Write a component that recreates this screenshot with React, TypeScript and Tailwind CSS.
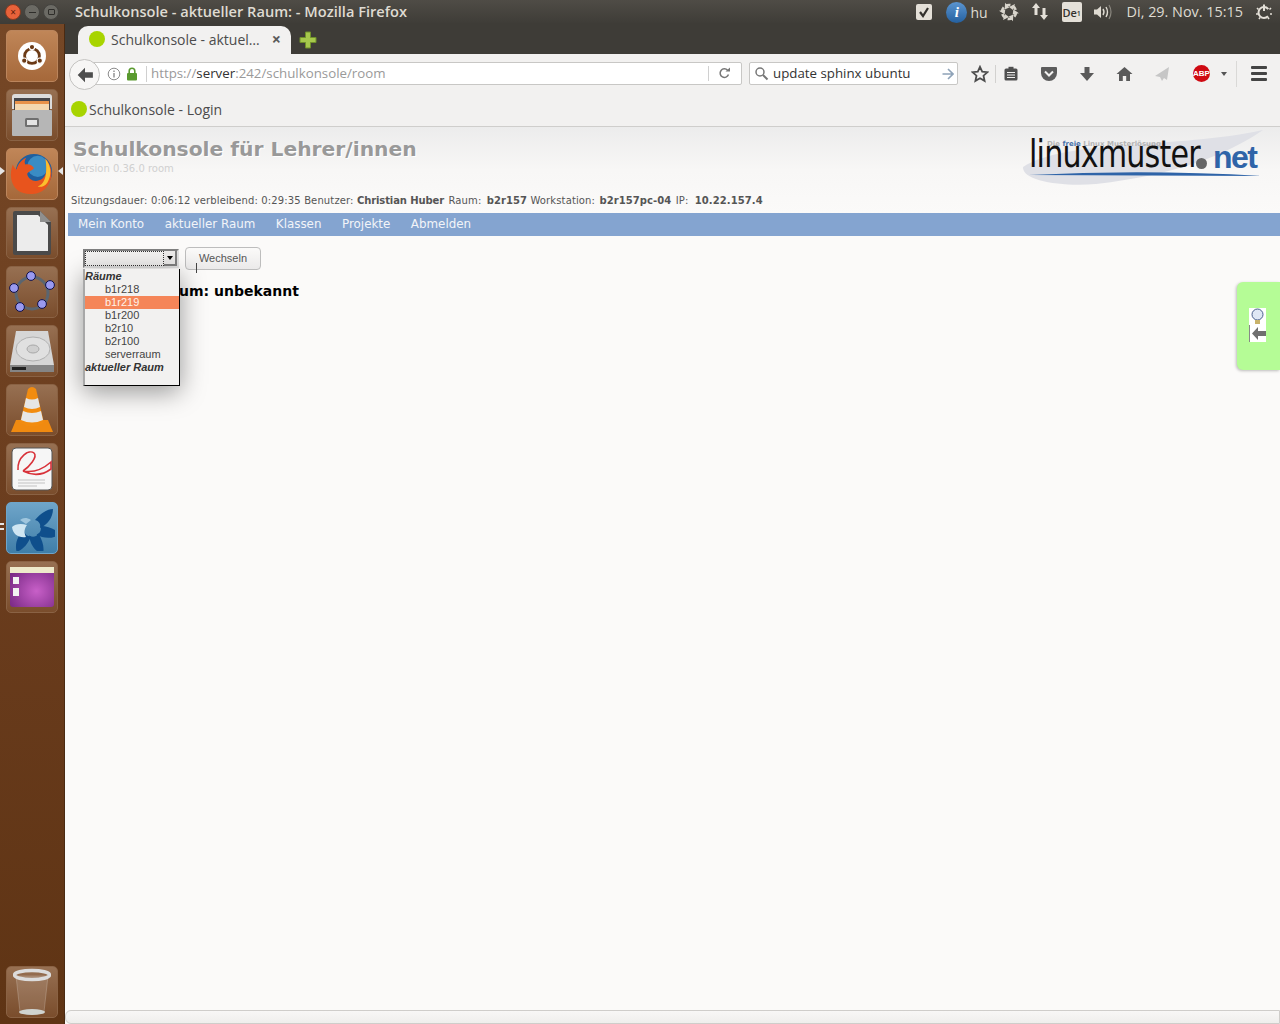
import type { ReactNode } from "react";

const ui = { fontFamily: '"Open Sans", "Noto Sans", sans-serif' };
const page = { fontFamily: '"DejaVu Sans", Verdana, sans-serif' };
const form = { fontFamily: '"Liberation Sans", Arial, sans-serif' };

function Tile({ children, active = false, blue = false }: { children: ReactNode; active?: boolean; blue?: boolean }) {
  const tone = blue
    ? "bg-gradient-to-b from-[#6fa5c9] to-[#3f7ea8] border-[#6fa5c9]"
    : active
      ? "bg-gradient-to-b from-[#c08658] to-[#a5683a] border-[#bb855c]"
      : "bg-gradient-to-b from-[#977052] to-[#7a4d2c] border-[#8a6244]";
  return <div className={`w-[52px] h-[52px] rounded-[5px] border flex items-center justify-center shrink-0 ${tone}`}>{children}</div>;
}

function Launcher() {
  return (
    <aside className="w-[65px] shrink-0 relative flex flex-col items-center pt-[6px] pb-[6px] pr-[1px] bg-gradient-to-b from-[#754726] via-[#6b3d1e] to-[#5f3414] border-r border-[#4a2a12]">
      <div className="flex flex-col gap-[7px]">
        <Tile active>
          <svg width="28" height="28" viewBox="0 0 36 36">
            <circle cx="18" cy="18" r="18" fill="#fff" />
            <circle cx="18" cy="18" r="9.5" fill="none" stroke="#6b3a16" strokeWidth="3.6" />
            <circle cx="18" cy="6.5" r="3.4" fill="#6b3a16" stroke="#fff" strokeWidth="1.4" />
            <circle cx="8" cy="24" r="3.4" fill="#6b3a16" stroke="#fff" strokeWidth="1.4" />
            <circle cx="28" cy="24" r="3.4" fill="#6b3a16" stroke="#fff" strokeWidth="1.4" />
          </svg>
        </Tile>
        <Tile>
          <svg width="42" height="44" viewBox="0 0 42 44">
            <path d="M1 4 Q1 1 4 1 H38 Q41 1 41 4 V16 H1Z" fill="#dcdcdc" />
            <rect x="3" y="5" width="36" height="13" fill="#46464a" />
            <rect x="4" y="8" width="34" height="3" fill="#e8924a" />
            <rect x="4" y="11" width="34" height="6" fill="#f4d8b0" />
            <rect x="1" y="17" width="40" height="26" rx="1" fill="#b6b6b6" />
            <rect x="14" y="25" width="14" height="9" rx="1.5" fill="#6f6f6f" />
            <rect x="16" y="27" width="10" height="5" fill="#e4e4e4" />
          </svg>
        </Tile>
        <Tile active>
          <svg width="46" height="46" viewBox="0 0 48 48">
            <circle cx="26" cy="22" r="19" fill="#1f5f9e" />
            <circle cx="30" cy="16" r="11" fill="#3a8cc4" />
            <path d="M38 8 C46 16 47 30 38 39 C31 46 17 47 9 41 C2 35 0 24 4 14 C5 17 7 19 8 19 C9 14 13 9 18 7 C16 10 16 12 17 14 C21 13 25 15 26 18 C25 20 20 21 19 24 C20 30 27 33 33 30 C39 27 41 18 38 8Z" fill="#e8541d" />
            <path d="M38 8 C44 15 45 25 40 33 C37 37 33 38 30 37 C36 35 41 27 38 8Z" fill="#fbc02d" />
          </svg>
        </Tile>
        <Tile>
          <svg width="40" height="46" viewBox="0 0 40 46">
            <path d="M1 3 Q1 1 3 1 H28 L39 12 V43 Q39 45 37 45 H3 Q1 45 1 43Z" fill="#4a4a4a" />
            <path d="M5 5 H26 L36 15 V41 H5Z" fill="#ececec" />
            <path d="M28 1 L39 12 H28Z" fill="#8f8f8f" />
          </svg>
        </Tile>
        <Tile>
          <svg width="50" height="50" viewBox="0 0 50 50">
            <circle cx="25" cy="26" r="16" fill="none" stroke="#5a6570" strokeWidth="3" />
            {[[24, 9], [43, 18], [35, 37], [13, 40], [7, 21]].map(([x, y]) => (
              <circle key={x} cx={x} cy={y} r="4.4" fill="#9a9af0" stroke="#10104a" strokeWidth="1" />
            ))}
          </svg>
        </Tile>
        <Tile>
          <svg width="46" height="44" viewBox="0 0 46 44">
            <path d="M7 2 H39 L45 36 H1Z" fill="#d6d6d6" />
            <ellipse cx="24" cy="20" rx="17" ry="12" fill="#e0e0e0" stroke="#b0b0b0" />
            <ellipse cx="24" cy="20" rx="6" ry="4" fill="#cfcfcf" stroke="#a8a8a8" />
            <rect x="1" y="36" width="44" height="7" fill="#858585" />
            <rect x="3" y="38" width="14" height="3" fill="#222" />
          </svg>
        </Tile>
        <Tile>
          <svg width="42" height="48" viewBox="0 0 42 48">
            <path d="M5 34 L0 46 H42 L37 34Z" fill="#f08a10" />
            <path d="M17 3 Q21 -1 25 3 L33 37 Q21 44 9 37Z" fill="#f28c10" />
            <path d="M15 12 Q21 15 27 12 L29 21 Q21 25 13 21Z" fill="#e6e6e6" />
            <path d="M12 25 Q21 29 30 25 L32 34 Q21 39 10 34Z" fill="#e6e6e6" />
          </svg>
        </Tile>
        <Tile>
          <svg width="42" height="44" viewBox="0 0 42 44">
            <rect x="1" y="1" width="40" height="42" rx="4" fill="#f6f6f6" stroke="#555" />
            <path d="M7 23 C6 10 18 2 23 6 C27 10 18 20 12 24 M12 24 C22 26 32 22 40 15 V22 C32 28 22 29 12 24" fill="none" stroke="#d8323a" strokeWidth="1.6" />
            <path d="M7 33 H34 M7 36 H34 M7 39 H26" stroke="#c2c2c2" strokeWidth="1" />
          </svg>
        </Tile>
        <Tile blue>
          <svg width="46" height="46" viewBox="0 0 46 46">
            {[0, 55, 110, 165].map((a) => (
              <path key={a} transform={`rotate(${a} 23 23)`} d="M26 15 C32 8 38 4 44 4 C44 13 38 20 31 23 C32 19 30 16 26 15Z" fill="#0f4f8c" />
            ))}
            <path d="M18 20 C12 18 6 19 3 22 C4 30 10 33 17 32 C15 28 15 24 18 20Z" fill="#cfe6f2" />
            <path d="M22 15 C17 12 14 13 11 15 L17 19Z" fill="#9fc6de" />
          </svg>
        </Tile>
        <Tile>
          <svg width="46" height="42" viewBox="0 0 46 42">
            <defs>
              <radialGradient id="violet" cx="0.6" cy="0.6" r="0.7">
                <stop offset="0" stopColor="#c860c8" />
                <stop offset="1" stopColor="#7a2a86" />
              </radialGradient>
            </defs>
            <rect x="1" y="1" width="44" height="40" rx="3" fill="url(#violet)" />
            <rect x="1" y="1" width="44" height="6" fill="#eeeacb" />
            <rect x="4" y="11" width="6" height="7" fill="#f2f2f2" />
            <rect x="4" y="22" width="6" height="8" fill="#f2f2f2" />
          </svg>
        </Tile>
      </div>
      <div className="mt-auto">
        <Tile>
          <svg width="38" height="48" viewBox="0 0 38 48">
            <path d="M3 8 L7 44 Q19 48 31 44 L35 8Z" fill="#ffffff" fillOpacity="0.12" stroke="#ffffff" strokeOpacity="0.2" />
            <ellipse cx="19" cy="7" rx="17.5" ry="4.5" fill="none" stroke="#dcdcdc" strokeWidth="3.5" />
            <ellipse cx="19" cy="44" rx="13" ry="3" fill="#cfd3d0" />
          </svg>
        </Tile>
      </div>
      <span className="absolute left-0 top-[143px] w-0 h-0 border-y-[4px] border-y-transparent border-l-[5px] border-l-[#e6e6e6]" />
      <span className="absolute right-[1px] top-[143px] w-0 h-0 border-y-[4px] border-y-transparent border-r-[5px] border-r-[#e6e6e6]" />
      <span className="absolute left-0 top-[499px] w-[4px] h-[2px] bg-[#e6e6e6]" />
      <span className="absolute left-0 top-[504px] w-[4px] h-[2px] bg-[#e6e6e6]" />
    </aside>
  );
}

function TopBar() {
  return (
    <header className="h-[24px] shrink-0 flex items-center bg-gradient-to-b from-[#4f4c46] to-[#3e3c37] text-[#dfdbd2] text-[14px]" style={ui}>
      <div className="flex items-center gap-[3px] pl-[5px]">
        <span className="w-[16px] h-[16px] rounded-full bg-[#e8623a] border border-[#8a3a20] flex items-center justify-center text-[#5c1d0a] text-[10px] leading-none">×</span>
        <span className="w-[16px] h-[16px] rounded-full bg-[#6b6a64] border border-[#44433f] flex items-center justify-center">
          <span className="w-[7px] h-[1px] bg-[#2e2d2a]" />
        </span>
        <span className="w-[16px] h-[16px] rounded-full bg-[#6b6a64] border border-[#44433f] flex items-center justify-center">
          <span className="w-[7px] h-[6px] border border-[#2e2d2a] rounded-[1px]" />
        </span>
      </div>
      <span className="ml-[16px] font-semibold text-[14.6px] whitespace-nowrap">Schulkonsole - aktueller Raum: - Mozilla Firefox</span>
      <div className="ml-auto flex items-center h-full">
        <span className="w-[16px] h-[16px] rounded-[2px] bg-[#e4e0d8] flex items-center justify-center mr-[14px]">
          <svg width="12" height="12" viewBox="0 0 12 12"><path d="M2 6 L5 10 L10 2" fill="none" stroke="#33312d" strokeWidth="2.2" /></svg>
        </span>
        <span className="w-[21px] h-[21px] rounded-full bg-gradient-to-b from-[#5b95d0] to-[#24609f] flex items-center justify-center text-white italic font-bold text-[15px] leading-none" style={{ fontFamily: '"Liberation Serif", serif' }}>i</span>
        <span className="ml-[3px] mr-[11px]">hu</span>
        <svg width="20" height="20" viewBox="0 0 20 20" className="mr-[12px]">
          <circle cx="10" cy="10" r="7" fill="none" stroke="#d8d4cb" strokeWidth="2.6" strokeDasharray="5 2.3" />
          {[0, 60, 120, 180, 240, 300].map((a) => (
            <path key={a} transform={`rotate(${a} 10 10)`} d="M10 5 L16 2 L14 8Z" fill="#d8d4cb" />
          ))}
        </svg>
        <svg width="18" height="20" viewBox="0 0 18 20" className="mr-[13px]">
          <path d="M5 1 L9 6 H6.5 V13 H3.5 V6 H1Z M13 18 L17 13 H14.5 V6 H11.5 V13 H9Z" fill="#e4e0d8" />
        </svg>
        <span className="w-[20px] h-[20px] rounded-[2px] bg-[#e4e0d8] text-[#33312d] text-[11px] font-semibold flex items-center justify-center leading-none mr-[11px]">De<sub className="text-[7px]">1</sub></span>
        <svg width="20" height="16" viewBox="0 0 20 16" className="mr-[14px]">
          <path d="M1 5.5 H4 L8 2 V14 L4 10.5 H1Z" fill="#dfdbd2" />
          <path d="M10 5 Q12 8 10 11 M13 3 Q16 8 13 13" fill="none" stroke="#dfdbd2" strokeWidth="1.4" />
          <path d="M16 1 Q20 8 16 15" fill="none" stroke="#8a877f" strokeWidth="1.2" />
        </svg>
        <span className="text-[14.4px] text-[#dfdbd2] whitespace-nowrap mr-[12px]">Di, 29. Nov. 15:15</span>
        <svg width="18" height="18" viewBox="0 0 18 18" className="mr-[7px]">
          <circle cx="9" cy="9.5" r="5.5" fill="none" stroke="#e4e0d8" strokeWidth="2" strokeDasharray="26 9" strokeDashoffset="-4" />
          <path d="M9 1.5 V8" stroke="#e4e0d8" strokeWidth="2" />
          <path d="M2 5 L3.5 6.5 M16 5 L14.5 6.5 M1 11 H3 M15 11 H17 M4 16 L5 14.5 M14 16 L13 14.5" stroke="#e4e0d8" strokeWidth="1.6" />
        </svg>
      </div>
    </header>
  );
}

function TabStrip() {
  return (
    <div className="h-[30px] shrink-0 bg-[#3e3c37] flex items-end pl-[13px]" style={ui}>
      <div className="relative w-[213px] h-[28px] bg-[#f2f1f0] rounded-t-[10px] flex items-center pl-[11px] pb-[2px] text-[#4c4c4c] text-[14px]">
        <span className="w-[16px] h-[16px] rounded-full bg-[#a8d400] shrink-0" />
        <span className="ml-[6px] whitespace-nowrap">Schulkonsole - aktuel…</span>
        <span className="absolute right-[10px] top-[3px] text-[16px] font-bold text-[#5a5a5a] leading-[20px]">×</span>
      </div>
      <svg width="18" height="18" viewBox="0 0 18 18" className="ml-[8px] mb-[5px]">
        <path d="M6.5 1 H11.5 V6.5 H17 V11.5 H11.5 V17 H6.5 V11.5 H1 V6.5 H6.5Z" fill="#a6c84c" stroke="#6f8f2a" />
      </svg>
    </div>
  );
}

function NavBar() {
  return (
    <div className="h-[36px] shrink-0 bg-[#f2f1f0] flex items-center relative text-[13.3px] pt-[3px]" style={ui}>
      <div className="absolute left-[4px] top-[5px] w-[31px] h-[31px] rounded-full bg-[#f7f6f5] border border-[#c4c3c1] flex items-center justify-center z-10">
        <svg width="18" height="18" viewBox="0 0 16 16"><path d="M8 1.5 L1.5 8 L8 14.5 V10.5 H15 V5.5 H8Z" fill="#4d4d4d" /></svg>
      </div>
      <div className="ml-[20px] w-[657px] h-[23px] bg-white border border-[#c8c7c5] rounded-r-[2px] flex items-center pl-[22px]">
        <svg width="14" height="14" viewBox="0 0 14 14" className="-ml-[1px]">
          <circle cx="7" cy="7" r="5.8" fill="none" stroke="#8c8c8c" />
          <path d="M7 6 V10.5 M7 3.5 V5" stroke="#8c8c8c" strokeWidth="1.4" />
        </svg>
        <svg width="12" height="14" viewBox="0 0 12 14" className="ml-[5px]">
          <rect x="1" y="6" width="10" height="7.5" rx="1" fill="#5a9a2f" />
          <path d="M3.2 6 V4 a2.8 2.8 0 0 1 5.6 0 V6" fill="none" stroke="#5a9a2f" strokeWidth="1.6" />
        </svg>
        <span className="w-px h-[16px] bg-[#d0d0d0] ml-[8px]" />
        <span className="ml-[4px] text-[#9a9a9a] whitespace-nowrap">https://<span className="text-[#333]">server</span>:242/schulkonsole/room</span>
        <span className="ml-auto w-px h-[15px] bg-[#d0d0d0]" />
        <svg width="13" height="13" viewBox="0 0 13 13" className="ml-[9px] mr-[10px]">
          <path d="M10.5 7.5 A4.3 4.3 0 1 1 9.6 3.2" fill="none" stroke="#777" strokeWidth="1.5" />
          <path d="M7.5 4.6 H12 V0.5Z" fill="#777" />
        </svg>
      </div>
      <div className="ml-[7px] w-[209px] h-[23px] bg-white border border-[#c8c7c5] rounded-[2px] flex items-center pl-[4px] pr-[3px] text-[#333]">
        <svg width="15" height="15" viewBox="0 0 15 15">
          <circle cx="6" cy="6" r="4" fill="none" stroke="#777" strokeWidth="1.5" />
          <path d="M9 9 L13.5 13.5" stroke="#777" strokeWidth="2" />
        </svg>
        <span className="ml-[4px] whitespace-nowrap">update sphinx ubuntu</span>
        <svg width="12" height="12" viewBox="0 0 12 12" className="ml-auto">
          <path d="M6 1 L11 6 L6 11 M11 6 H0.5" fill="none" stroke="#8fa3b8" strokeWidth="1.6" />
        </svg>
      </div>
      <svg width="18" height="18" viewBox="0 0 18 18" className="ml-[13px]">
        <path d="M9 1.8 L11.2 6.6 L16.4 7.2 L12.5 10.7 L13.6 15.9 L9 13.3 L4.4 15.9 L5.5 10.7 L1.6 7.2 L6.8 6.6Z" fill="none" stroke="#4d4d4d" strokeWidth="1.8" />
      </svg>
      <span className="ml-[6px] w-px h-[18px] bg-[#d2d1cf]" />
      <svg width="16" height="16" viewBox="0 0 16 16" className="ml-[7px]">
        <rect x="1.5" y="2.5" width="13" height="12" rx="1.5" fill="#4f4f4f" />
        <rect x="5.5" y="0.8" width="5" height="3" fill="#4f4f4f" />
        <path d="M4 6.5 H12 M4 9 H12 M4 11.5 H12" stroke="#f2f1f0" />
      </svg>
      <svg width="18" height="16" viewBox="0 0 18 16" className="ml-[21px]">
        <path d="M1 2 Q1 1 2 1 H16 Q17 1 17 2 V7 A8 8 0 0 1 1 7Z" fill="#5c5c5c" />
        <path d="M5 5.5 L9 9.5 L13 5.5" fill="none" stroke="#f2f1f0" strokeWidth="2" />
      </svg>
      <svg width="16" height="16" viewBox="0 0 16 16" className="ml-[21px]">
        <path d="M5.5 1 H10.5 V7 H15 L8 15 L1 7 H5.5Z" fill="#5a5a5a" />
      </svg>
      <svg width="17" height="16" viewBox="0 0 17 16" className="ml-[21px]">
        <path d="M8.5 1 L16.5 8 H14 V15 H10.2 V10 H6.8 V15 H3 V8 H0.5Z" fill="#5a5a5a" />
      </svg>
      <svg width="16" height="16" viewBox="0 0 16 16" className="ml-[21px]">
        <path d="M15 1 L1 10 L6 11 L8 15 L10 12 L13 14Z" fill="#c6c6c6" />
      </svg>
      <span className="ml-[23px] w-[17px] h-[17px] rounded-full bg-[#cf0a12] flex items-center justify-center text-white text-[8px] font-bold leading-none" style={form}>ABP</span>
      <span className="ml-[11px] w-0 h-0 border-x-[3px] border-x-transparent border-t-[4px] border-t-[#555]" />
      <span className="ml-[9px] w-px h-[26px] bg-[#dad9d7]" />
      <div className="ml-[14px] flex flex-col gap-[3px]">
        <span className="w-[16px] h-[3px] bg-[#444] rounded-[1px]" />
        <span className="w-[16px] h-[3px] bg-[#444] rounded-[1px]" />
        <span className="w-[16px] h-[3px] bg-[#444] rounded-[1px]" />
      </div>
    </div>
  );
}

function Logo() {
  return (
    <div className="relative w-[240px] h-[56px] shrink-0">
      <svg width="240" height="56" viewBox="0 0 240 56" className="absolute inset-0 overflow-visible">
        <path d="M-3 36 C40 8 150 18 237 -1 C200 24 150 44 70 53 C36 56 -4 50 -3 36Z" fill="#dfe0e6" />
        <path d="M3 44 Q120 38 236 45 Q120 44.5 3 44Z" fill="#2f64a8" />
      </svg>
      <span className="absolute left-[21px] top-[8px] text-[7px] text-[#b5b5b5] font-bold whitespace-nowrap" style={page}>
        Die <span className="text-[#4a72a8]">freie</span> Linux Musterlösung
      </span>
      <span className="absolute left-[3px] top-[2px] text-[37px] leading-[44px] text-[#111] tracking-[-1px] whitespace-nowrap [transform:scaleX(0.815)] origin-left" style={page}>linuxmuster</span>
      <span className="absolute left-[170px] top-[27px] w-[11px] h-[11px] rounded-full bg-[#666]" />
      <span className="absolute left-[187px] top-[4px] text-[32px] leading-[44px] font-bold text-[#2f64a8] tracking-[-1.5px] whitespace-nowrap" style={form}>net</span>
    </div>
  );
}

function RoomMenu() {
  const rooms = ["b1r218", "b1r219", "b1r200", "b2r10", "b2r100", "serverraum"];
  return (
    <div className="absolute left-[18px] top-[33px] z-20 w-[97px] h-[117px] bg-[#f2f1f0] border-l-2 border-l-[#a8a8a8] border-r border-r-black border-b border-b-black pt-[1px] text-[11px] leading-[13px] text-[#444] shadow-[0_6px_24px_rgba(0,0,0,0.4)]" style={form}>
      <div className="font-bold italic text-[#333]">Räume</div>
      {rooms.map((room) => (
        <div key={room} className={room === "b1r219" ? "pl-[20px] bg-[#f58558] text-[#fff3ea]" : "pl-[20px]"}>{room}</div>
      ))}
      <div className="font-bold italic text-[#333]">aktueller Raum</div>
    </div>
  );
}

function Content() {
  return (
    <main className="relative flex-1 min-h-0 bg-[#fbfaf9] flex flex-col">
      <div className="h-[86px] shrink-0 bg-gradient-to-b from-[#ececec] to-[#fbfaf9] via-[#f8f7f6] flex justify-between pl-[8px] pr-[14px]" style={page}>
        <div className="pt-[10px]">
          <h1 className="text-[20.25px] leading-[25px] font-bold text-[#999] [text-shadow:1px_1px_0_#fff] whitespace-nowrap">Schulkonsole für Lehrer/innen</h1>
          <p className="text-[10px] leading-[13px] text-[#d0d0d0]">Version 0.36.0 room</p>
        </div>
        <div className="pt-[4px]"><Logo /></div>
      </div>
      <p className="h-[0px] ml-[6px] text-[10px] leading-[0px] text-[#555] whitespace-nowrap tracking-[0.13px] -mt-[12px] mb-[12px]" style={page}>
        Sitzungsdauer: 0:06:12 verbleibend: 0:29:35 Benutzer: <b className="tracking-[-0.1px]">Christian Huber</b> <span className="ml-[1px]">Raum:</span> <b className="ml-[2px] tracking-[0.08px]">b2r157</b> Workstation: <b className="ml-[1px] tracking-[0.08px]">b2r157pc-04</b> <span className="ml-[1px]">IP:</span> <b className="ml-[3px] tracking-[0.08px]">10.22.157.4</b>
      </p>
      <nav className="ml-[3px] h-[23px] shrink-0 bg-[#84a4d0] flex items-center pl-[10px] pt-[1px] gap-[20.5px] text-[11.9px] text-[#f2f4f8]" style={page}>
        <span>Mein Konto</span>
        <span>aktueller Raum</span>
        <span>Klassen</span>
        <span>Projekte</span>
        <span>Abmelden</span>
      </nav>
      <div className="relative flex-1 pl-[18px] pt-[11px]">
        <div className="flex items-start gap-[6px]">
          <div className="mt-[2px] w-[96px] h-[19px] border-2 border-t-[#808080] border-l-[#808080] border-r-[#e0e0e0] border-b-[#e0e0e0] bg-[#f2f1f0] flex items-stretch">
            <span className="flex-1 border border-dotted border-[#333]" />
            <span className="w-[13px] bg-[#ecebea] border-r-2 border-b-2 border-[#808080] flex items-center justify-center">
              <span className="w-0 h-0 border-x-[3px] border-x-transparent border-t-[4px] border-t-black" />
            </span>
          </div>
          <button className="w-[76px] h-[23px] rounded-[4px] border border-[#bdbdbd] bg-gradient-to-b from-[#fbfaf9] to-[#ebeaea] text-[11px] text-[#555]" style={form}>Wechseln</button>
        </div>
        <h2 className="mt-[12px] text-[14px] leading-[18px] font-bold text-black whitespace-nowrap" style={page}>aktueller Raum: unbekannt</h2>
        <RoomMenu />
        <span className="absolute left-[131px] top-[27px] w-px h-[10px] bg-[#444] z-10" />
        <aside className="absolute right-0 top-[46px] w-[43px] h-[88px] bg-[#b5fc96] rounded-l-[6px] shadow-[-1px_1px_3px_rgba(0,0,0,0.25)] flex items-center pl-[12px] pb-[2px]">
          <div className="w-[17px] h-[34px] bg-white flex flex-col items-center">
            <svg width="17" height="17" viewBox="0 0 17 17">
              <circle cx="8.5" cy="6.5" r="5.5" fill="#dfe7f4" stroke="#4a5f8c" strokeWidth="1" />
              <rect x="6" y="12" width="5" height="4" fill="#c9b36a" />
            </svg>
            <svg width="17" height="17" viewBox="0 0 17 17">
              <path d="M0.5 0 V17" stroke="#888" />
              <path d="M9 2 L3 8.5 L9 15 V11 H17 V6 H9Z" fill="#6f6f6f" />
            </svg>
          </div>
        </aside>
      </div>
      <div className="h-[14px] shrink-0 rounded-l-[6px] border border-[#cfcdca] bg-gradient-to-b from-[#f8f7f6] to-[#efeeec]" />
    </main>
  );
}

export default function App() {
  return (
    <div className="w-[1280px] h-[1024px] flex flex-col overflow-hidden">
      <TopBar />
      <div className="flex flex-1 min-h-0">
        <Launcher />
        <div className="flex-1 min-w-0 flex flex-col">
          <TabStrip />
          <NavBar />
          <div className="h-[37px] shrink-0 bg-[#f2f1f0] border-b border-[#cfcecc] flex items-center pl-[6px] pt-[2px] text-[14px] text-[#4c4c4c]" style={ui}>
            <span className="w-[16px] h-[16px] rounded-full bg-[#a8d400]" />
            <span className="ml-[2px]">Schulkonsole - Login</span>
          </div>
          <Content />
        </div>
      </div>
    </div>
  );
}
